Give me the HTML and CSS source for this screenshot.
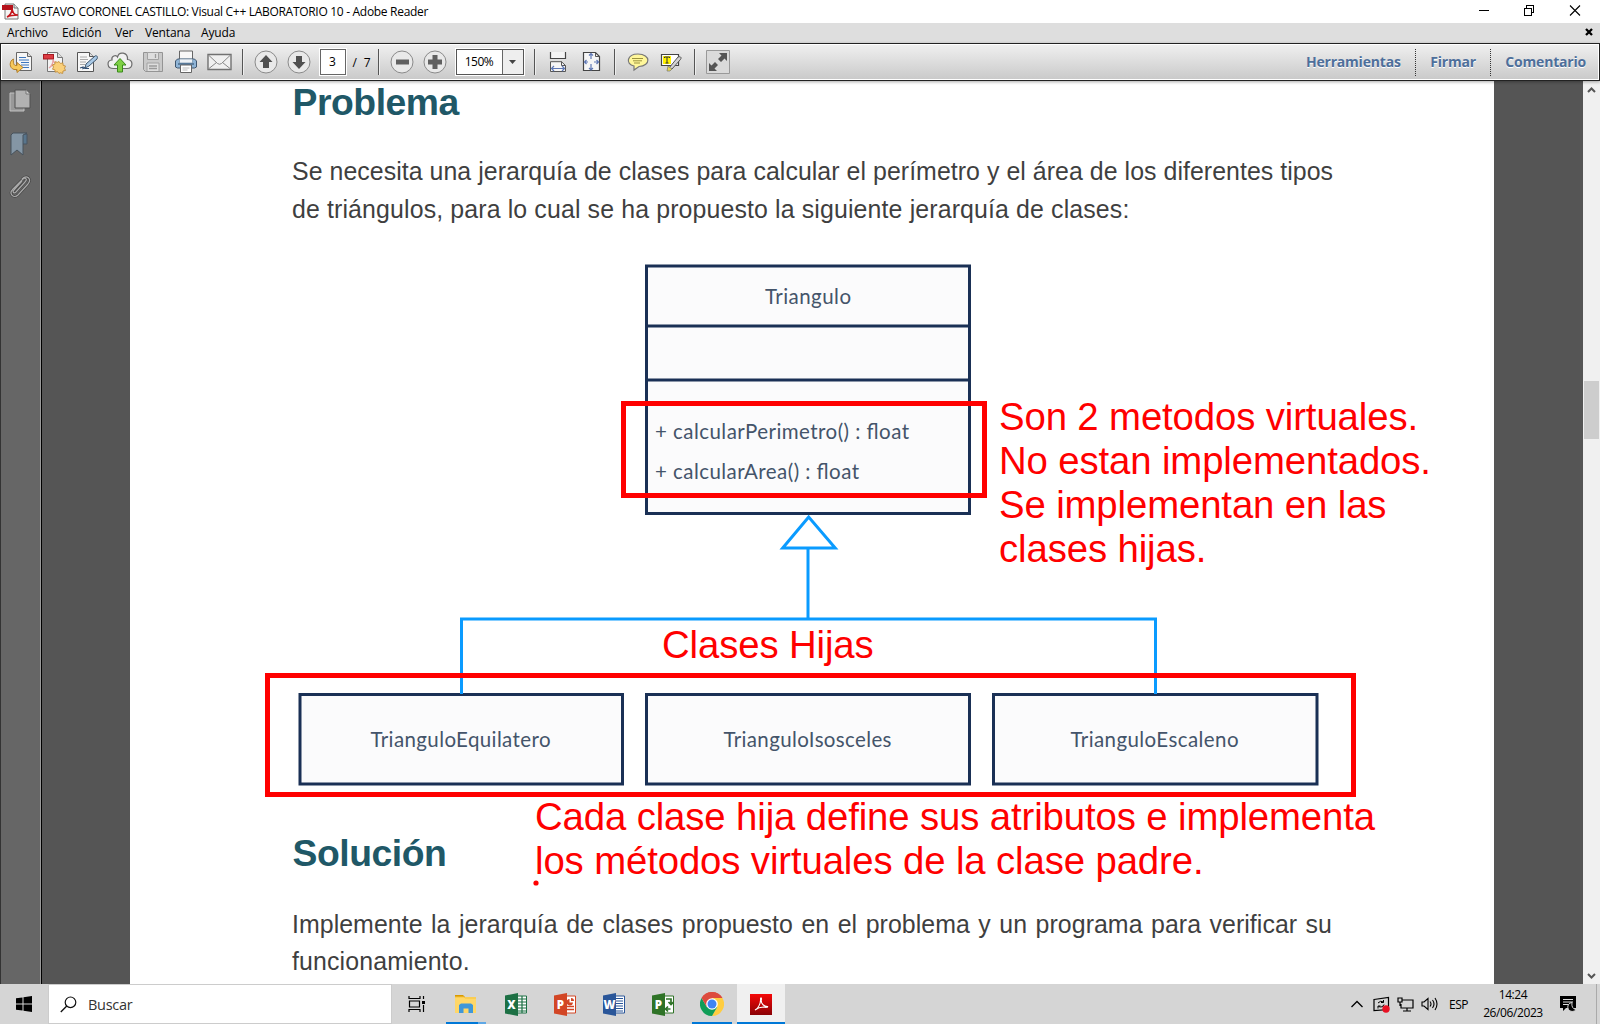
FILE: index.html
```html
<!DOCTYPE html>
<html lang="es">
<head>
<meta charset="utf-8">
<title>GUSTAVO CORONEL CASTILLO: Visual C++ LABORATORIO 10 - Adobe Reader</title>
<link rel="stylesheet" href="styles.css">
</head>
<body>
<header class="titlebar">
  <svg class="app-icon" width="18" height="17" viewBox="0 0 18 17"><path d="M3 1h9l4 4v11H3z" fill="#f4f4f4" stroke="#777"/><path d="M12 1v4h4" fill="#ddd" stroke="#777"/><path d="M0 2h11v5H0z" fill="#b5121b"/><path d="M5 14c3-1 5-5 5-8 1 4 2 6 6 6-4 0-7 0-11 2z" fill="none" stroke="#c4161c" stroke-width="1.5"/></svg>
  <span class="title">GUSTAVO CORONEL CASTILLO: Visual C++ LABORATORIO 10 - Adobe Reader</span>
  <svg class="win-controls" width="104" height="14" viewBox="0 0 104 14" fill="none" stroke="#000" shape-rendering="crispEdges"><path d="M1 7.500h10M46.500 5.500h7v7h-7zM48.500 5v-2.500h7v7h-2"/><path d="M92 2.500l10 10M102 2.500l-10 10" shape-rendering="auto" stroke-width="1.100"/></svg>
</header>
<nav class="menubar">
  <span class="m1">Archivo</span><span class="m2">Edición</span><span class="m3">Ver</span><span class="m4">Ventana</span><span class="m5">Ayuda</span>
  <svg class="doc-close" width="8" height="8" viewBox="0 0 8 8"><path d="M1 1l6 6M7 1l-6 6" stroke="#000" stroke-width="2.300"/></svg>
</nav>
<div class="toolbar">
  <div class="slot"><svg width="24" height="24" viewBox="0 0 24 24"><path d="M7.500 2.500h11l4 4v14h-15z" fill="#f6f6f6" stroke="#666"/><path d="M18.500 2.500v4h4" fill="#ddd" stroke="#666"/><path d="M10 7.500h7M10 10h10M12 12.500h8M12 15h8M13 17.500h7" stroke="#3d76bd" stroke-width="1.100"/><path d="M4.500 9C0 11 0 18 5 19.500h3v3l6-5-6-5v3c-3 .5-4-1.500-3.500-6.500z" fill="#f7c95a" stroke="#b5802a"/></svg></div>
  <div class="slot"><svg width="24" height="24" viewBox="0 0 24 24"><path d="M5.500 2.500h10l5 5v14h-15z" fill="#f4f4f4" stroke="#777"/><path d="M15.500 2.500v5h5" fill="#ddd" stroke="#777"/><path d="M7 18c3-2 4-6 4-8 1 3 3 4 6 4-4 0-7 1-10 4z" fill="none" stroke="#e9a0a3" stroke-width="1.200"/><rect x="1.500" y="4.500" width="10" height="4.500" fill="#dc3b42" stroke="#a41b22"/><path d="M17 11.500l1.500 2 2.400-.7.200 2.500 2.400.7-1 2.200 1 2.200-2.500.6-.3 2.400-2.400-.6L17 23.500l-1.500-1.800-2.300.5-.3-2.400-2.400-.6 1-2.200-1-2.200 2.400-.7.200-2.400 2.400.6z" fill="#fad07a" stroke="#bd8732" stroke-width=".8"/></svg></div>
  <div class="slot"><svg width="24" height="24" viewBox="0 0 24 24"><path d="M2.500 2.500h12l4 4v15h-16z" fill="#f7f7f7" stroke="#555"/><path d="M14.500 2.500v4h4" fill="#ddd" stroke="#555"/><path d="M5 7h7M5 9.500h8M5 12h6M5 14.500h5" stroke="#aaa"/><path d="M5 18l3-1v1.500l2-1v1h4" fill="none" stroke="#2d4d74" stroke-width="1.200"/><path d="M10 18l1-4 9-8c2-1 3 1 2 3l-8 7z" fill="#a9c9e6" stroke="#3e566e"/></svg></div>
  <div class="slot"><svg width="26" height="24" viewBox="0 0 26 24"><path d="M6.500 18.500c-7 0-7-8-1.500-8.500C4 6 9 4.500 10.500 7 12 1 21 2 20.500 9.500c6 0 6 9-.5 9z" fill="#f1f1f1" stroke="#6c6c6c" stroke-width="1.200"/><path d="M13 8.500l6 6.500h-3.500v7h-5v-7H7z" fill="#7fd045" stroke="#3b8a1c"/></svg></div>
  <div class="slot"><svg width="24" height="24" viewBox="0 0 24 24"><path d="M2.500 2.500h19v19h-17l-2-2z" fill="#c9c9c9" stroke="#949494"/><path d="M6.500 2.500h11v7h-11zM6 21v-8h12v8" fill="#dedede" stroke="#a2a2a2"/><path d="M14.500 4v4M8 16h8M8 18.500h8" stroke="#9a9a9a" stroke-width="1.300"/></svg></div>
  <div class="slot"><svg width="24" height="24" viewBox="0 0 24 24"><path d="M5.500 12V1h13v11" fill="#f8f8f8" stroke="#666"/><path d="M3.500 9h17l2 2v6l-2 1h-17l-2-1v-6z" fill="#8fb4d6" stroke="#40566e"/><path d="M5.500 9h13v4h-13z" fill="#eef2f6" stroke="#7790a6" stroke-width=".7"/><path d="M4 14h16" stroke="#486b8b" stroke-width="1.500"/><path d="M6.500 15h11v7.500h-11z" fill="#fff" stroke="#666"/><path d="M8.500 18h7M8.500 20h5" stroke="#bbb"/></svg></div>
  <div class="slot"><svg width="25" height="24" viewBox="0 0 25 24"><path d="M1 4.500h23v15H1z" fill="#f0f0f0" stroke="#717171" stroke-width="1.400"/><path d="M2 5.500l8.500 8q2 1.500 4 0l8.500-8M2 18.500l7.500-6M23 18.500l-7.500-6" fill="none" stroke="#888"/></svg></div>
  <div class="sep"><i></i></div>
  <div class="slot"><svg width="24" height="24" viewBox="0 0 24 24"><circle cx="12" cy="12" r="11" fill="#e9e9e9" stroke="#8a8a8a"/><path d="M12 5l6.500 7H15v6H9v-6H5.500z" fill="#505050"/></svg></div>
  <div class="slot"><svg width="24" height="24" viewBox="0 0 24 24"><circle cx="12" cy="12" r="11" fill="#e9e9e9" stroke="#8a8a8a"/><path d="M12 19l6.500-7H15V6H9v6H5.500z" fill="#505050"/></svg></div>
  <div class="page-slot"><span class="page-box">3</span></div>
  <span class="pages"><span>/</span><span>7</span></span>
  <div class="sep"><i></i></div>
  <div class="slot"><svg width="24" height="24" viewBox="0 0 24 24"><circle cx="12" cy="12" r="11" fill="#e9e9e9" stroke="#8a8a8a"/><path d="M6 9.500h13v5H6z" fill="#606060"/></svg></div>
  <div class="slot"><svg width="24" height="24" viewBox="0 0 24 24"><circle cx="12" cy="12" r="11" fill="#e9e9e9" stroke="#8a8a8a"/><path d="M9.500 5h5v4.500H19v5h-4.500V19h-5v-4.500H5v-5h4.500z" fill="#606060"/></svg></div>
  <div class="zoom-slot"><div class="zoom-box"><span>150%</span><b><svg width="7" height="4" viewBox="0 0 7 4"><path d="M0 0h7L3.500 4z" fill="#444"/></svg></b></div></div>
  <div class="sep"><i></i></div>
  <div class="slot"><svg width="24" height="24" viewBox="0 0 24 24"><path d="M4.500 2v6.500h15V2" fill="#f4f4f4" stroke="#444" stroke-width="1.200"/><path d="M4.500 21.500v-9.800h11l4 3.800v6z" fill="#f6f6f6" stroke="#555"/><path d="M15.500 11.500v4h4" fill="none" stroke="#555"/><path d="M5.500 18.500h13M8 16l-2.500 2.500L8 21M16 16l2.500 2.500L16 21" fill="none" stroke="#5f78b5" stroke-width="1.200"/></svg></div>
  <div class="slot"><svg width="24" height="24" viewBox="0 0 24 24"><path d="M4.500 2.500h12l4 4v14h-16z" fill="#f6f6f6" stroke="#444" stroke-width="1.200"/><path d="M16.500 2.500v4h4" fill="none" stroke="#555"/><path d="M12 3.500V9M12 14v6M5.500 12H9M15 12h5M10 5.500l2-2 2 2M10 18l2 2 2-2M7.500 10l-2 2 2 2M17.500 10l2 2-2 2" fill="none" stroke="#5f78b5" stroke-width="1.200"/></svg></div>
  <div class="sep"><i></i></div>
  <div class="slot"><svg width="24" height="24" viewBox="0 0 24 24"><path d="M12 4c13 0 13 12 1 12.500L8 20v-4C-1 14 1 4 12 4z" fill="#fff79a" stroke="#777" stroke-width="1.200"/><path d="M6 8.500h11M7 10.800h9M8 13h6" stroke="#9b923e"/></svg></div>
  <div class="slot"><svg width="24" height="24" viewBox="0 0 24 24"><path d="M2.500 4.500h17v11h-17z" fill="#fff" stroke="#444" stroke-width="1.200"/><path d="M4 6h8v8H4z" fill="#fff200"/><path d="M5.500 8V7h5v1M8 7v6M6.500 13h3" fill="none" stroke="#333"/><path d="M10 18l9-11c3-1 4 1 2 3l-8 9z" fill="#d2d2d2" stroke="#555"/><path d="M9 16l4 3-2 2H8z" fill="#e9d94f" stroke="#777" stroke-width=".7"/></svg></div>
  <div class="sep"><i></i></div>
  <div class="slot"><svg width="24" height="24" viewBox="0 0 24 24"><path d="M.5.500h23v23H.5z" fill="#dadada" stroke="#999"/><path d="M13 3h8v8l-2.500-2.500L15 12l-3-3 3.500-3.500zM11 21H3v-8l2.500 2.500L9 12l3 3-3.500 3.500z" fill="#555"/></svg></div>
  <div class="panes"><b class="p1">Herramientas</b><b class="p2">Firmar</b><b class="p3">Comentario</b></div>
</div>
<main class="viewer">
  <aside class="sidebar">
    <svg width="22" height="24" viewBox="0 0 22 24"><path d="M1 4h14v18H1z" fill="#999" stroke="#c2c2c2"/><path d="M6 1h11l4 4v14H6z" fill="#b2b2b2" stroke="#505050"/><path d="M17 1v4h4" fill="#d2d2d2" stroke="#777"/></svg>
    <svg width="22" height="24" viewBox="0 0 22 24"><path d="M13 2h5v10h-5z" fill="#58758c" stroke="#485460"/><path d="M2 3l2-2h14l-4 2v20l-6-5-6 5z" fill="#8496a5" stroke="#47525c"/></svg>
    <svg width="22" height="24" viewBox="0 0 22 24"><path d="M7 17l9-10c3-3 0-5-2-3L4 14c-5 5 1 10 5 6L19 9c4-5-1-10-6-5M7 17c-2 2-4 0-2-2l8-9" fill="none" stroke="#444" stroke-width="2.600"/><path d="M7 17l9-10c3-3 0-5-2-3L4 14c-5 5 1 10 5 6L19 9c4-5-1-10-6-5M7 17c-2 2-4 0-2-2l8-9" fill="none" stroke="#aaa" stroke-width="1.200"/></svg>
  </aside>
  <div class="canvas">
    <article class="sheet">
      <h2>Problema</h2>
      <p class="intro"><span class="just">Se necesita una jerarquía de clases para calcular el perímetro y el área de los diferentes tipos</span><span>de triángulos, para lo cual se ha propuesto la siguiente jerarquía de clases:</span></p>
      <svg class="figure" width="1364" height="570" viewBox="130 240 1364 570">
        <g fill="#fbfbfc" stroke="#1a3055" stroke-width="3">
          <path d="M646.500 266h323v247.500h-323zM646.500 326h323M646.500 380h323"/>
          <path d="M300 694.500h322.500v89.500H300zM646.500 694.500h323v89.500h-323zM993.500 694.500h323.500v89.500h-323.500z"/>
        </g>
        <path d="M808.700 517l-26 31h52.500zM808 548v71M461.500 694v-75h694v75" fill="none" stroke="#0a9bff" stroke-width="3"/>
        <g class="uml">
          <text x="765" y="303.700" textLength="86">Triangulo</text>
          <text x="655" y="438.500" textLength="254">+ calcularPerimetro() : float</text>
          <text x="655" y="478.700" textLength="204">+ calcularArea() : float</text>
          <text x="370.500" y="746.800" textLength="180">TrianguloEquilatero</text>
          <text x="723.500" y="746.800" textLength="168">TrianguloIsosceles</text>
          <text x="1070.500" y="746.800" textLength="168">TrianguloEscaleno</text>
        </g>
      </svg>
      <h2 class="second">Solución</h2>
      <p class="outro"><span class="just">Implemente la jerarquía de clases propuesto en el problema y un programa para verificar su</span><span>funcionamiento.</span></p>
      <svg class="notes" width="1364" height="902" viewBox="130 81 1364 902">
        <path d="M623.500 403.500h361v92h-361zM267.500 675.500h1086v119h-1086z" fill="none" stroke="#f00" stroke-width="5"/>
        <g class="note">
          <text x="999" y="430">Son 2 metodos virtuales.</text>
          <text x="999" y="474">No estan implementados.</text>
          <text x="999" y="518">Se implementan en las</text>
          <text x="999" y="562">clases hijas.</text>
          <text x="662" y="658">Clases Hijas</text>
          <text x="535" y="830">Cada clase hija define sus atributos e implementa</text>
          <text x="535" y="874">los métodos virtuales de la clase padre.</text>
        </g>
        <circle cx="536" cy="883" r="2.600" fill="#f00"/>
      </svg>
    </article>
  </div>
  <div class="scrollbar">
    <svg width="9" height="6" viewBox="0 0 9 6"><path d="M1 5l3.500-3.500L8 5" fill="none" stroke="#555" stroke-width="2"/></svg>
    <i class="thumb"></i>
    <svg width="9" height="6" viewBox="0 0 9 6"><path d="M1 1l3.500 3.500L8 1" fill="none" stroke="#555" stroke-width="2"/></svg>
  </div>
</main>
<footer class="taskbar">
  <div class="start"><svg width="16" height="16" viewBox="0 0 16 16"><path d="M0 2.300l6.500-.9v6.100H0zM7.500 1.200L16 0v7.500H7.500zM0 8.500h6.500v6.100L0 13.700zM7.500 8.500H16V16l-8.500-1.200z"/></svg></div>
  <div class="search"><svg width="17" height="17" viewBox="0 0 17 17"><circle cx="10.500" cy="6.300" r="5.300" fill="none" stroke="#111" stroke-width="1.200"/><path d="M6.800 10L.8 16" stroke="#111" stroke-width="1.300"/></svg><span>Buscar</span></div>
  <div class="apps">
    <div class="app view"><svg width="17" height="16" viewBox="0 0 17 16" fill="none" stroke="#000" stroke-width="1.200"><path d="M1 0v2.500h11V0M1 16v-2.500h11V16M1.500 5h10v6h-10zM15.500 0v3M15.500 9v7"/><path d="M14 5h3v3h-3z" fill="#000" stroke="none"/></svg></div>
    <div class="app open multi"><svg width="22" height="20" viewBox="0 0 22 20"><path d="M0 1h8l2 2H0z" fill="#d99a00"/><path d="M0 3h21v16H0z" fill="#ffd768"/><path d="M0 3l9 0 1 1h11" fill="none" stroke="#f3c341"/><path d="M4 19v-8l2-1.500h10l2 1.500v8h-4.500v-4.500h-5V19z" fill="#3f97d9"/></svg></div>
    <div class="app"><svg width="22" height="23" viewBox="0 0 22 23"><path d="M12.500 3h9v17h-9z" fill="#fff" stroke="#1d7044"/><path d="M13 6h8M13 9h8M13 12h8M13 15h8M13 18h8M17 3v17" stroke="#1d7044" stroke-width="1.200"/><path d="M0 2.500L13 0v23L0 20.500z" fill="#1d7044"/><text x="6.500" y="15.500" class="glyph">X</text></svg></div>
    <div class="app"><svg width="22" height="23" viewBox="0 0 22 23"><path d="M12.500 3h9v17h-9z" fill="#fff" stroke="#d24625"/><path d="M13 13.500h7M13 16.500h7" stroke="#d24625" stroke-width="1.500"/><path d="M15.500 6a3.200 3.200 0 1 0 3.500 3.500h-3.500zM17 5v3h3a3 3 0 0 0-3-3z" fill="#d24625"/><path d="M0 2.500L13 0v23L0 20.500z" fill="#d24625"/><text x="6.500" y="15.500" class="glyph">P</text></svg></div>
    <div class="app"><svg width="22" height="23" viewBox="0 0 22 23"><path d="M12.500 3h9v17h-9z" fill="#fff" stroke="#2a5699"/><path d="M13 5.500h7M13 8h7M13 10.500h7M13 13h7M13 15.500h7M13 18h7" stroke="#2a5699" stroke-width="1.100"/><path d="M0 2.500L13 0v23L0 20.500z" fill="#2a5699"/><text x="6.500" y="15.500" class="glyph">W</text></svg></div>
    <div class="app"><svg width="22" height="23" viewBox="0 0 22 23"><path d="M12.500 3h9v17h-9z" fill="#fff" stroke="#2f7327"/><path d="M14 6h5v5M16.500 9l2.500 2.500L21.500 9M18.500 16h-5M16 13.500L13.500 16l2.500 2.500" fill="none" stroke="#2f7327" stroke-width="1.700"/><path d="M0 2.500L13 0v23L0 20.500z" fill="#2f7327"/><text x="6.500" y="15.500" class="glyph">P</text></svg></div>
    <div class="app open chrome"><svg width="24" height="24" viewBox="0 0 24 24"><path d="M12 12L1.600 6a12 12 0 0 1 20.800 0z" fill="#dd4b3e"/><path d="M12 12V6h10.400A12 12 0 0 1 12 24l5.200-9z" fill="#ffcd40"/><path d="M12 12l5.200 3L12 24A12 12 0 0 1 1.600 6l5.200 9z" fill="#109d58"/><path d="M1.600 6l5.200 9L12 6h10.400A12 12 0 0 0 1.600 6z" fill="#dd4b3e"/><circle cx="12" cy="12" r="5.800" fill="#fff"/><circle cx="12" cy="12" r="4.500" fill="#3f83f3"/></svg></div>
    <div class="app open active"><svg width="22" height="21" viewBox="0 0 22 21"><defs><linearGradient id="acro" x2="0" y2="1"><stop offset="0" stop-color="#f60808"/><stop offset="1" stop-color="#8a0206"/></linearGradient></defs><path d="M0 0h22v21H0z" fill="url(#acro)"/><path d="M5 16c3-1 6-7 5.500-11 0-2 1.500-1 .8 1-.5 4 3 6.500 6.200 6.500 1 1-2 1-4 .5-3 0-6 1-8.500 3z" fill="none" stroke="#fff" stroke-width="1.100"/></svg></div>
  </div>
  <div class="tray">
    <svg class="t-chev" width="12" height="8" viewBox="0 0 12 8"><path d="M.5 7L6 1.500 11.500 7" fill="none" stroke="#000" stroke-width="1.300"/></svg>
    <svg class="t-upd" width="17" height="17" viewBox="0 0 17 17"><path d="M1 3.500l14.500-2v12L1 14.500z" fill="none" stroke="#000" stroke-width="1.200"/><path d="M5 7q2.500-3 5.500-1M10.500 4v2.500H8M11 8.500q-1.500 3.500-5.500 2M5 12.500V10h2.500" fill="none" stroke="#000" stroke-width="1"/><circle cx="13" cy="13" r="3.700" fill="#e81123"/></svg>
    <svg class="t-net" width="17" height="15" viewBox="0 0 17 15" fill="none" stroke="#000" stroke-width="1.200"><path d="M5 3h11v8H4V7M10 11v3M6 14h8M1 1h4v4H1zM3 5v4"/></svg>
    <svg class="t-vol" width="17" height="14" viewBox="0 0 17 14" fill="none" stroke="#000" stroke-width="1.100"><path d="M1 5h2l4-3.500v11L3 9H1zM9 4.500q2 2.500 0 5M11.500 3q3 4 0 8M14 1q4 6 0 12"/></svg>
    <span class="lang">ESP</span>
    <div class="clock"><span class="time">14:24</span><span class="date">26/06/2023</span></div>
    <svg class="t-note" width="17" height="16" viewBox="0 0 17 16"><path d="M0 0h16v12H6l-3 3v-3H0z"/><path d="M3 3.500h10M3 6h10M3 8.500h6" stroke="#ddd" stroke-width="1.100"/><path d="M12 6.500a4.500 4.500 0 1 0 4 7q-5-1-4-7z" stroke="#d5d5d5"/></svg>
  </div>
  <i class="desk"></i>
</footer>
</body>
</html>
```
FILE: styles.css
```css
* { box-sizing: border-box; }
html, body { margin: 0; height: 100%; overflow: hidden; }
body { width: 1600px; height: 1024px; display: flex; flex-direction: column; font-family: "Open Sans", "Noto Sans", sans-serif; font-size: 12px; color: #000; background: #fff; }
svg { display: block; flex: none; }
span, b { white-space: nowrap; }

.titlebar { height: 23px; flex: none; display: flex; align-items: center; padding: 0 18px 0 2px; }
.title { margin-left: 3px; letter-spacing: -0.3px; font-size: 12px; }
.win-controls { margin: 0 0 3px auto; }

.menubar { height: 20px; flex: none; display: flex; align-items: center; background: #dedede; padding: 0 7px 2px 7px; letter-spacing: -0.15px; }
.menubar span { flex: none; }
.m1 { width: 55px; }
.m2 { width: 53px; }
.m3 { width: 30px; }
.m4 { width: 56px; }
.doc-close { margin-left: auto; }

.toolbar { height: 38px; flex: none; display: flex; align-items: center; padding-left: 3.500px; border: 1px solid #222; background: linear-gradient(#f0f0f0, #c9c9c9); box-shadow: inset 0 0 0 1px #fff, 0 1px 3px #0005; position: relative; z-index: 1; }
.slot { width: 33px; flex: none; display: flex; justify-content: center; }
.sep { width: 14px; flex: none; display: flex; justify-content: center; }
.sep i { width: 1px; height: 26px; background: #555; box-shadow: 1px 0 #eee; }
.page-slot { width: 34px; display: flex; justify-content: center; }
.page-box { width: 26px; height: 26px; line-height: 24px; border: 1px solid #666; outline: 1px solid #fff; background: #fff; text-align: center; }
.pages { width: 22px; padding: 0 1px 0 3px; display: flex; justify-content: space-between; }
.zoom-slot { width: 76px; display: flex; justify-content: center; }
.zoom-box { width: 68px; height: 26px; display: flex; border: 1px solid #555; outline: 1px solid #fff; background: #fff; line-height: 24px; }
.zoom-box span { width: 45px; text-align: center; letter-spacing: -0.5px; }
.zoom-box b { flex: 1; border-left: 1px solid #666; background: #eee; display: flex; align-items: center; justify-content: center; }
.panes { margin-left: auto; display: flex; height: 27px; line-height: 26px; color: #4e6f9b; font-size: 14px; letter-spacing: -0.2px; padding-right: 13px; text-shadow: 0 1px #fff; }
.panes b { padding-left: 14.500px; }
.panes .p1, .panes .p2 { padding-right: 14px; border-right: 1px dotted #333; }

.viewer { flex: 1; min-height: 0; display: flex; background: #555; }
.sidebar { width: 42px; flex: none; background: #666; border-right: 1px solid #000; border-left: 1px solid #333; box-shadow: inset -1px 0 #999; display: flex; flex-direction: column; gap: 19px; padding: 8px 0 0 8px; }
.canvas { flex: 1; min-width: 0; overflow: hidden; padding-left: 88px; }
.sheet { position: relative; width: 1364px; height: 100%; background: #fff; font-family: "Liberation Sans", Arial, sans-serif; color: #3f3f3f; overflow: hidden; display: flow-root; }
.sheet h2 { margin: 0 0 0 162.500px; color: #205867; font-size: 37.300px; line-height: 42px; letter-spacing: -0.45px; }
.sheet p { margin: 30px 0 0 162px; width: 1040px; font-size: 24.900px; line-height: 37.500px; }
.sheet p span { display: block; letter-spacing: 0.13px; }
.sheet p .just { text-align-last: justify; letter-spacing: 0.05px; }
.figure { margin-top: 12px; }
.sheet .second { margin-top: 22px; }
.sheet .outro { margin-top: 32px; line-height: 37px; }
.uml { font-family: Lato, Carlito, sans-serif; font-size: 20.500px; fill: #44546a; }
.notes { position: absolute; left: 0; top: 0; }
.note { font-size: 38.350px; letter-spacing: -0.12px; fill: #f00; }

.scrollbar { width: 17px; flex: none; background: #f0f0f0; display: flex; flex-direction: column; align-items: center; padding: 6px 0 5px; }
.thumb { width: 15px; height: 58px; margin: 288px 0 auto; background: #cdcdcd; }

.taskbar { height: 40px; flex: none; display: flex; background: #d5d5d5; }
.start { width: 48px; display: flex; align-items: center; justify-content: center; }
.search { width: 344px; display: flex; align-items: center; gap: 11px; padding-left: 11px; background: #fff; border: 1px solid #ccc; font-size: 14.500px; color: #333; letter-spacing: -0.3px; }
.apps { display: flex; padding-left: 0.800px; }
.app { width: 49.100px; display: flex; align-items: center; justify-content: center; }
.view { padding-right: 2px; }
.open { background: linear-gradient(#0078d7, #0078d7) center bottom / 40px 2px no-repeat; }
.multi { background: linear-gradient(90deg, #0078d7 80%, #5fa8e6 80%) center bottom / 40px 2px no-repeat; }
.active { background: linear-gradient(#0078d7, #0078d7) center bottom / 48px 2px no-repeat, linear-gradient(#f0f0f0, #f0f0f0) center top / 48px 38px no-repeat; }
.glyph { font: 800 11.500px "Open Sans", sans-serif; fill: #fff; text-anchor: middle; }
.tray { margin-left: auto; display: flex; align-items: center; }
.t-upd { margin-left: 10px; }
.t-net { margin-left: 7px; }
.t-vol { margin-left: 7px; }
.lang { width: 20px; margin-left: 11px; letter-spacing: -0.5px; }
.clock { width: 66px; margin-left: 11px; display: flex; flex-direction: column; text-align: center; line-height: 18px; letter-spacing: -0.4px; }
.t-note { margin: 0 19px 0 14px; }
.desk { width: 4px; border-left: 1px solid #aaa; }
```
